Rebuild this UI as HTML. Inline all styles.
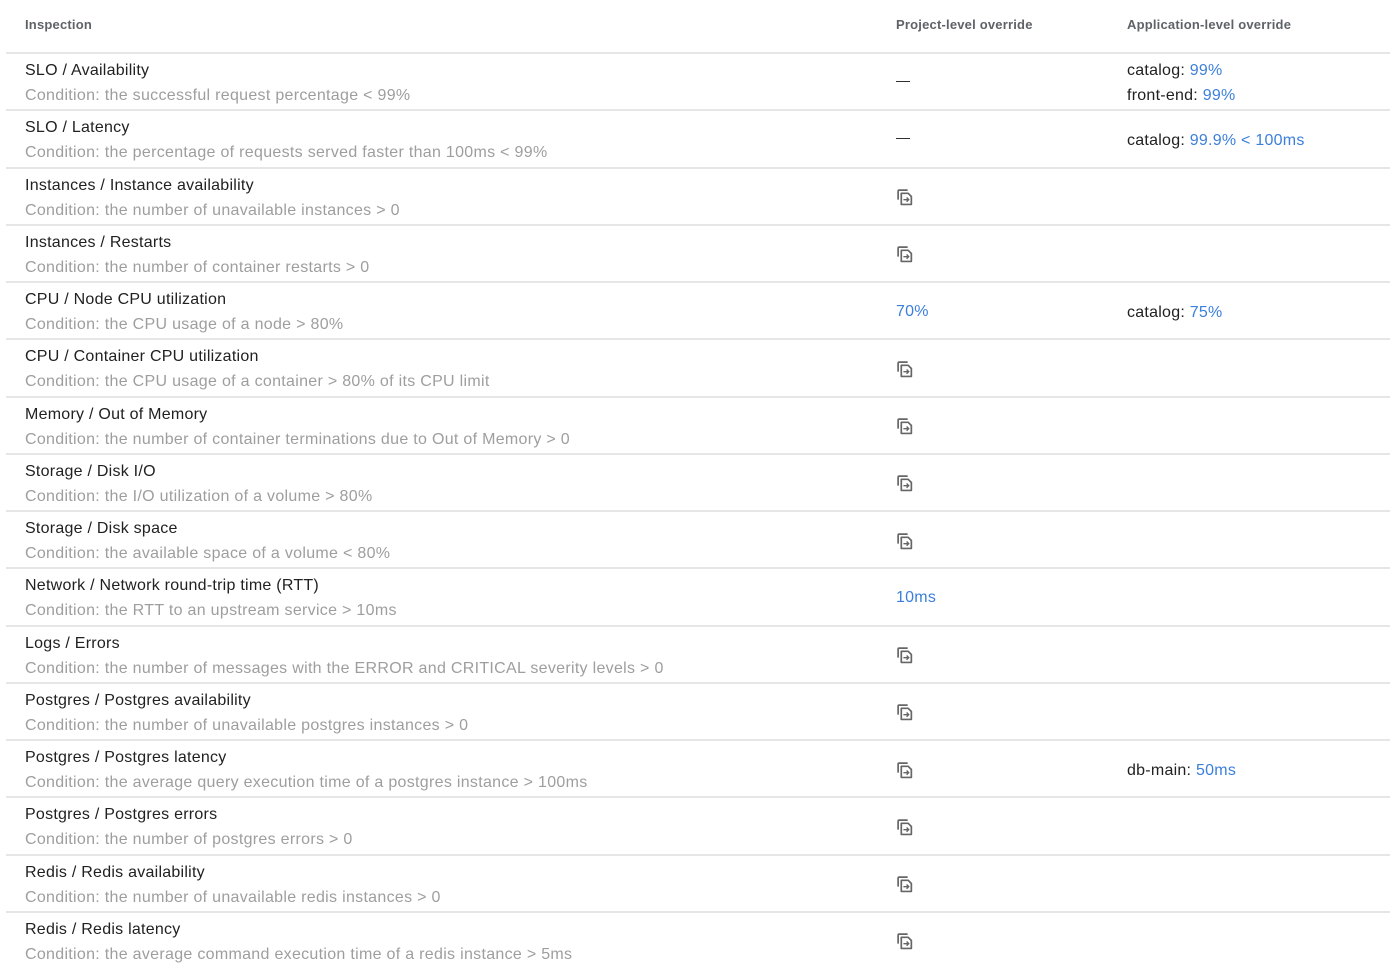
<!DOCTYPE html>
<html><head><meta charset="utf-8"><style>
body{margin:0;width:1400px;height:978px;background:#fff;font-family:"Liberation Sans",Arial,sans-serif;position:relative;overflow:hidden}
.h{position:absolute;top:17px;font-size:13px;font-weight:bold;color:#5f6368;letter-spacing:0.2px}
.line{position:absolute;left:6px;width:1384px;height:2px;background:#e6e6e6}
.t{position:absolute;left:25px;font-size:16px;color:#212121;white-space:nowrap;letter-spacing:0.25px}
.c{position:absolute;left:25px;font-size:16px;color:#9e9e9e;white-space:nowrap;letter-spacing:0.3px}
.p{position:absolute;left:896px;font-size:16px;color:#212121;white-space:nowrap;letter-spacing:0.25px}
.a{position:absolute;left:1127px;font-size:16px;color:#212121;white-space:nowrap;line-height:25px;letter-spacing:0.25px}
.b{color:#3b7fdb}
svg{position:absolute;left:896px}
</style></head><body>
<div class="h" style="left:25px">Inspection</div>
<div class="h" style="left:896px">Project-level override</div>
<div class="h" style="left:1127px">Application-level override</div>
<div id="r"></div>
<script>
var rows=[
["SLO / Availability","the successful request percentage &lt; 99%","dash",'catalog: <span class="b">99%</span><br>front-end: <span class="b">99%</span>'],
["SLO / Latency","the percentage of requests served faster than 100ms &lt; 99%","dash",'catalog: <span class="b">99.9% &lt; 100ms</span>'],
["Instances / Instance availability","the number of unavailable instances &gt; 0","icon",""],
["Instances / Restarts","the number of container restarts &gt; 0","icon",""],
["CPU / Node CPU utilization","the CPU usage of a node &gt; 80%","70%",'catalog: <span class="b">75%</span>'],
["CPU / Container CPU utilization","the CPU usage of a container &gt; 80% of its CPU limit","icon",""],
["Memory / Out of Memory","the number of container terminations due to Out of Memory &gt; 0","icon",""],
["Storage / Disk I/O","the I/O utilization of a volume &gt; 80%","icon",""],
["Storage / Disk space","the available space of a volume &lt; 80%","icon",""],
["Network / Network round-trip time (RTT)","the RTT to an upstream service &gt; 10ms","10ms",""],
["Logs / Errors","the number of messages with the ERROR and CRITICAL severity levels &gt; 0","icon",""],
["Postgres / Postgres availability","the number of unavailable postgres instances &gt; 0","icon",""],
["Postgres / Postgres latency","the average query execution time of a postgres instance &gt; 100ms","icon",'db-main: <span class="b">50ms</span>'],
["Postgres / Postgres errors","the number of postgres errors &gt; 0","icon",""],
["Redis / Redis availability","the number of unavailable redis instances &gt; 0","icon",""],
["Redis / Redis latency","the average command execution time of a redis instance &gt; 5ms","icon",""]];
var icon='<path d="M2 11V3a1 1 0 0 1 1-1h8" fill="none" stroke="#666" stroke-width="1.6"/><path d="M5 5h6.5l3 3v7.5H5z" fill="none" stroke="#666" stroke-width="1.6" stroke-linejoin="round"/><path d="M7 11h5M10 9l2 2-2 2" fill="none" stroke="#666" stroke-width="1.3"/>';
var h='';
rows.forEach(function(r,i){
 var y=53+i*57.25;
 h+='<div class="line" style="top:'+(y-1)+'px"></div>';
 h+='<div class="t" style="top:'+(y+9)+'px">'+r[0]+'</div>';
 h+='<div class="c" style="top:'+(y+34)+'px">Condition: '+r[1]+'</div>';
 var mid=y+28.6;
 if(r[2]=='dash')h+='<div class="p" style="top:'+(mid-10)+'px;font-size:14px">—</div>';
 else if(r[2]=='icon')h+='<svg width="18" height="18" viewBox="0 0 17 17" style="top:'+(mid-8)+'px">'+icon+'</svg>';
 else h+='<div class="p b" style="top:'+(mid-8)+'px">'+r[2]+'</div>';
 if(r[3]){var n=r[3].indexOf('<br>')>0;h+='<div class="a" style="top:'+(n?y+5:mid-11)+'px">'+r[3]+'</div>';}
});
document.getElementById('r').innerHTML=h;
</script>
</body></html>
